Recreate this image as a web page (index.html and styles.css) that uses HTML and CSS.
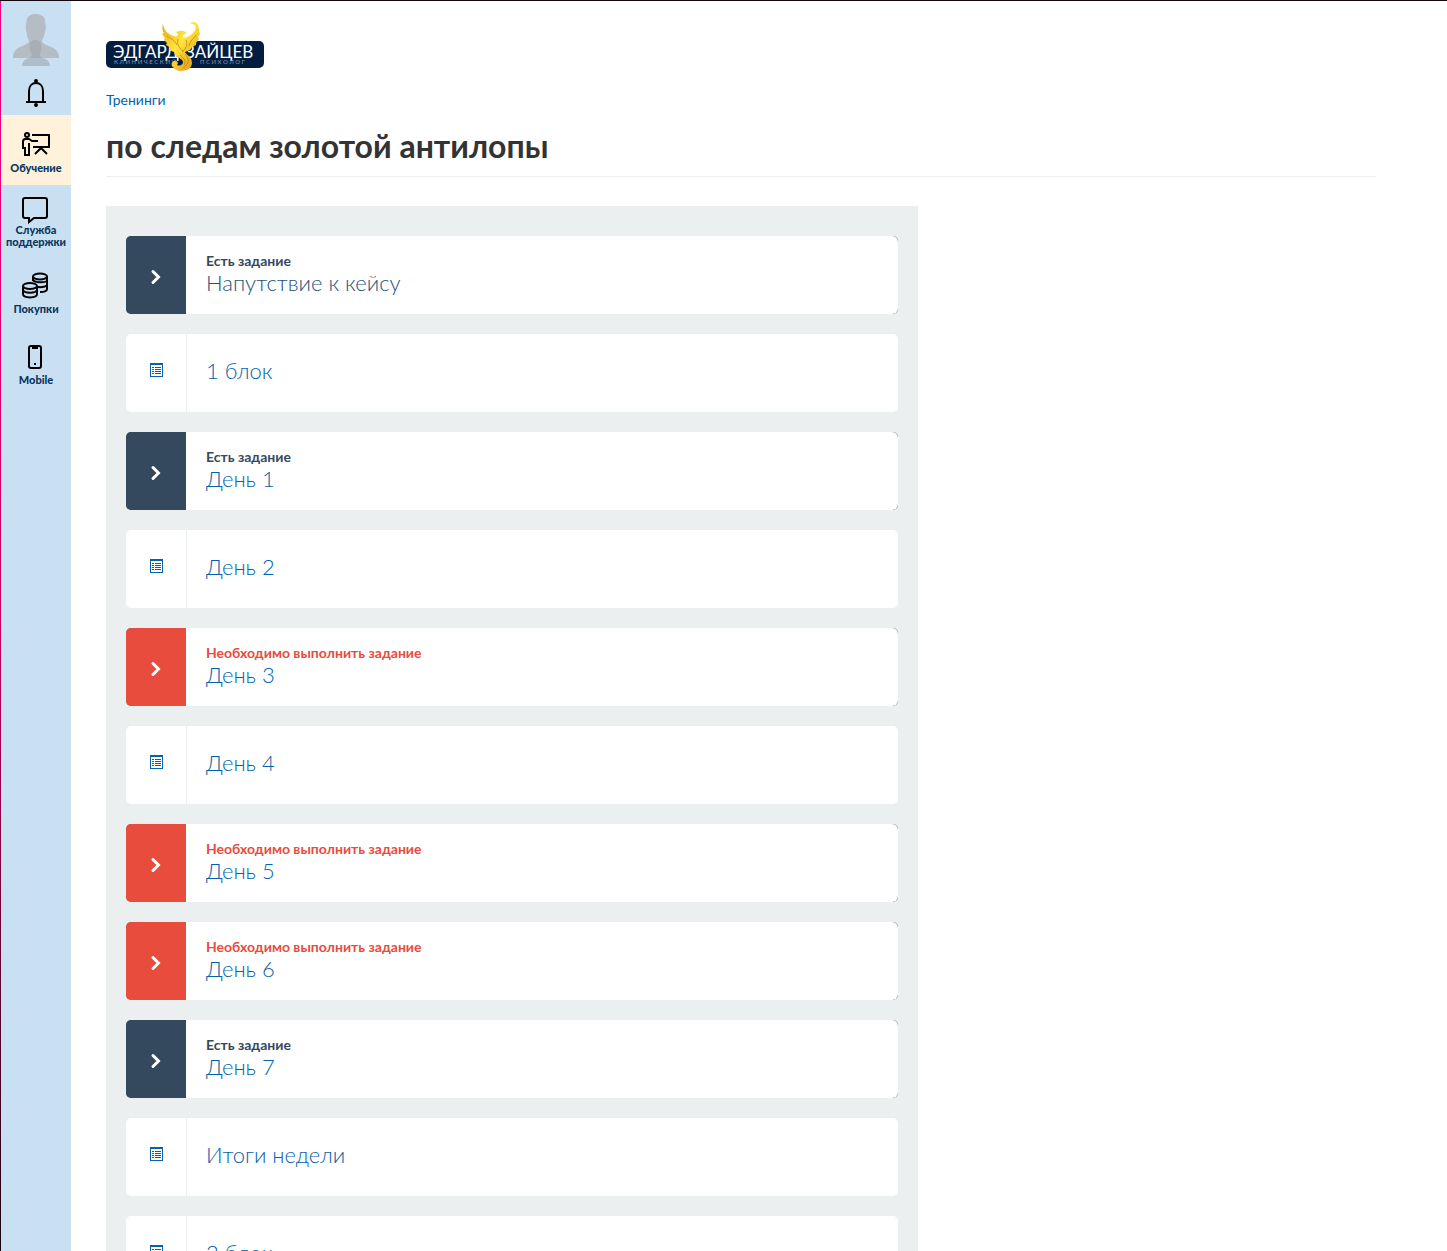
FILE: index.html
```
<!DOCTYPE html>
<html lang="ru">
<head>
  <meta charset="UTF-8">
  <meta name="viewport" content="width=device-width, initial-scale=1.0">
  <title>по следам золотой антилопы</title>
  <link rel="stylesheet" href="styles.css">
</head>
<body>
  <svg class="sprite" aria-hidden="true">
    <symbol id="icon-arrow" viewBox="0 0 12 16">
      <path d="M3 2.500 8.500 8 3 13.500" fill="none" stroke="currentColor" stroke-width="3" stroke-linecap="round"/>
    </symbol>
    <symbol id="icon-list" viewBox="0 0 13 14">
      <path d="M0 0h13v14H0zM1 2v11h11V2z" fill="currentColor" fill-rule="evenodd"/>
      <path d="M2 4.500h2M2 6.500h2M2 8.500h2M2 10.500h2M5 4.500h6M5 6.500h6M5 8.500h6M5 10.500h6" stroke="currentColor"/>
    </symbol>
  </svg>

  <nav class="sidebar">
    <a class="user" href="#" aria-label="Профиль">
      <svg width="46" height="53" viewBox="0 0 46 53">
        <path d="M13.500 7C14 2 18 0 22.500 0S32 2 32 7L33 14 31.500 20C31 24 29 25 29 28C35 34 46 32 46 44H0C0 32 10 34 16 28C16 25 14 24 14 20L12.500 14Z" fill="#b5bcc4"/>
        <path d="M17 30C17 27 20 26 22.500 26S28 27 28 30L28.500 35 26.500 41C28 45 37 44 37 52H9C9 44 18 45 19 41L16.500 35Z" fill="#9fa5ac" fill-opacity=".6"/>
      </svg>
    </a>
    <a class="bell" href="#" aria-label="Уведомления">
      <svg width="22" height="28" viewBox="0 0 22 28" fill="none" stroke="#000" stroke-width="2">
        <path d="M4 23V12C4 7 7 4 11 4S18 7 18 12V23M1 23H21"/>
        <circle cx="11" cy="2" r="1"/>
        <circle cx="11" cy="26" r="1"/>
      </svg>
    </a>
    <a class="item active" href="#">
      <svg width="28" height="26" viewBox="0 0 28 26" fill="none" stroke="#000" stroke-width="2">
        <circle cx="5" cy="3" r="2"/>
        <path d="M10 3H27V15H11M16 9H10L7 7H3.500C2 7 1 8 1 9.500V16H3V23H7V17M7 23V11M19 15V18M19 16L13 22M19 16L25 22"/>
      </svg>
      <span>Обучение</span>
    </a>
    <a class="item support" href="#">
      <svg width="30" height="27" viewBox="0 0 30 27" fill="none" stroke="#000" stroke-width="2">
        <path d="M4 1H24C25.500 1 26 2 26 3V19C26 20.500 25 21 24 21H13L8 25V21H4C2.500 21 2 20 2 19V3C2 2 2.500 1 4 1Z"/>
      </svg>
      <span>Служба поддержки</span>
    </a>
    <a class="item purchases" href="#">
      <svg width="30" height="27" viewBox="0 0 30 27" fill="none" stroke="#000" stroke-width="2">
        <ellipse cx="19" cy="4.500" rx="7" ry="3"/>
        <path d="M12 5V9M26 4.500V17C26 19 23 20 19 20M12 8C14 11 25 11 26 8.500M17 15C21 15.500 26 14.500 26 12.500"/>
        <ellipse cx="9" cy="14" rx="7" ry="3"/>
        <path d="M2 14V22C2 26.500 16 26.500 16 22V14M2 18C3 21.500 15 21.500 16 18"/>
      </svg>
      <span>Покупки</span>
    </a>
    <a class="item mobile" href="#">
      <svg width="18" height="25" viewBox="0 0 18 25" fill="none" stroke="#000" stroke-width="2">
        <rect x="2" y="1" width="12" height="22" rx="2"/>
        <path d="M5 2.500H11" stroke-width="3"/>
        <path d="M7 19H9"/>
      </svg>
      <span>Mobile</span>
    </a>
  </nav>

  <main class="page">
    <a class="logo" href="#" aria-label="Эдгард Зайцев">
      <svg width="158" height="50" viewBox="0 0 158 50">
        <defs>
          <linearGradient id="gold" x1="0" y1="0" x2="1" y2="1">
            <stop offset="0" stop-color="#e5a51b"/>
            <stop offset=".45" stop-color="#ffe63b"/>
            <stop offset="1" stop-color="#d98a12"/>
          </linearGradient>
        </defs>
        <rect y="20" width="158" height="27" rx="5" fill="#031d40"/>
        <text class="logo-name" x="7" y="37">ЭДГАРД</text>
        <text class="logo-name" x="79" y="37">ЗАЙЦЕВ</text>
        <text class="logo-sub" x="8" y="43">К Л И Н И Ч Е С К И Й</text>
        <text class="logo-sub" x="94" y="43">П С И Х О Л О Г</text>
        <path d="M57 3C58 10 62 13 68 15C70 16 72 15 72 13L70 11 74 10C77 9 79 11 81 12L77 14C76 17 79 17 81 16C88 13 91 8 89 4L84 2C90 -1 93 3 93 10L94 13 92 16 93 18 90 22 90 24 86 26 84 29 79 31C80 34 86 35 86 42C86 47 81 50 75 50C71 50 68 48 67 46C65 45 65 41 68 40C71 39 73 42 71 44C75 46 79 42 76 39C73 36 68 35 68 31L63 29 65 27 60 24 61 22 58 19 59 17 56 13 58 12C56 9 56 6 57 3Z" fill="url(#gold)"/>
        <path d="M72 18C71 24 73 27 77 30M80 19C82 24 80 28 76 31M61 15C65 18 69 19 71 24M90 14C88 18 84 19 83 25M79 33C84 38 83 43 77 47M74 34C79 38 80 41 78 44" fill="none" stroke="#b77b12" stroke-opacity=".7"/>
      </svg>
    </a>
    <div class="breadcrumbs"><a href="#">Тренинги</a></div>
    <h1>по следам золотой антилопы</h1>

    <ul class="lessons">
      <li><a class="lesson task visited" href="#">
        <span class="mark"><svg width="12" height="16"><use href="#icon-arrow"/></svg></span>
        <span class="info"><b>Есть задание</b><span class="title">Напутствие к кейсу</span></span>
      </a></li>
      <li><a class="lesson" href="#">
        <span class="mark"><svg width="13" height="14"><use href="#icon-list"/></svg></span>
        <span class="info"><span class="title">1 блок</span></span>
      </a></li>
      <li><a class="lesson task" href="#">
        <span class="mark"><svg width="12" height="16"><use href="#icon-arrow"/></svg></span>
        <span class="info"><b>Есть задание</b><span class="title">День 1</span></span>
      </a></li>
      <li><a class="lesson" href="#">
        <span class="mark"><svg width="13" height="14"><use href="#icon-list"/></svg></span>
        <span class="info"><span class="title">День 2</span></span>
      </a></li>
      <li><a class="lesson task required" href="#">
        <span class="mark"><svg width="12" height="16"><use href="#icon-arrow"/></svg></span>
        <span class="info"><b>Необходимо выполнить задание</b><span class="title">День 3</span></span>
      </a></li>
      <li><a class="lesson" href="#">
        <span class="mark"><svg width="13" height="14"><use href="#icon-list"/></svg></span>
        <span class="info"><span class="title">День 4</span></span>
      </a></li>
      <li><a class="lesson task required" href="#">
        <span class="mark"><svg width="12" height="16"><use href="#icon-arrow"/></svg></span>
        <span class="info"><b>Необходимо выполнить задание</b><span class="title">День 5</span></span>
      </a></li>
      <li><a class="lesson task required" href="#">
        <span class="mark"><svg width="12" height="16"><use href="#icon-arrow"/></svg></span>
        <span class="info"><b>Необходимо выполнить задание</b><span class="title">День 6</span></span>
      </a></li>
      <li><a class="lesson task" href="#">
        <span class="mark"><svg width="12" height="16"><use href="#icon-arrow"/></svg></span>
        <span class="info"><b>Есть задание</b><span class="title">День 7</span></span>
      </a></li>
      <li><a class="lesson" href="#">
        <span class="mark"><svg width="13" height="14"><use href="#icon-list"/></svg></span>
        <span class="info"><span class="title">Итоги недели</span></span>
      </a></li>
      <li><a class="lesson" href="#">
        <span class="mark"><svg width="13" height="14"><use href="#icon-list"/></svg></span>
        <span class="info"><span class="title">2 блок</span></span>
      </a></li>
    </ul>
  </main>
</body>
</html>
```
FILE: styles.css
```
* {
  box-sizing: border-box;
}
body {
  display: flex;
  height: 100vh;
  margin: 0;
  overflow: hidden;
  border-top: 1px solid #14060f;
  background: #fff;
  font-family: Lato, "Open Sans", sans-serif;
  font-size: 14px;
  color: #333;
}
a {
  color: #0562ab;
  text-decoration: none;
}
svg {
  display: block;
}
.sprite {
  position: absolute;
  width: 0;
  height: 0;
}

/* sidebar */
.sidebar {
  flex: 0 0 71px;
  border-left: 1px solid;
  border-image: linear-gradient(#f0047f, #c80060 50%, #14060f) 1;
  background: #c9e0f3;
}
.sidebar a {
  display: flex;
  flex-direction: column;
  align-items: center;
}
.user {
  padding-top: 13px;
}
.bell {
  height: 48px;
  padding-top: 12px;
}
.item {
  height: 70px;
  font-size: 11px;
  font-weight: 900;
  line-height: 12px;
  text-align: center;
}
.sidebar .item {
  color: #0a3660;
}
.item span {
  margin-top: 4px;
}
.active {
  padding-top: 17px;
  background: #fff1da;
}
.support {
  padding-top: 12px;
}
.support span {
  margin-top: 0;
}
.purchases,
.mobile {
  padding-top: 17px;
}
.mobile {
  padding-top: 20px;
}

/* content */
.page {
  flex: 1;
  min-width: 0;
  padding: 20px 71px 30px 35px;
  overflow-y: auto;
  scrollbar-width: none;
}
.logo {
  display: inline-block;
  vertical-align: top;
}
.logo-name {
  font-family: Lato, "Open Sans", sans-serif;
  font-size: 17px;
  fill: #fff;
}
.logo-sub {
  font-family: Lato, "Open Sans", sans-serif;
  font-size: 6px;
  fill: #8d9bb0;
}
.breadcrumbs {
  margin-top: 19px;
  line-height: 20px;
}
h1 {
  margin: 18px 0 29px;
  padding-bottom: 12px;
  border-bottom: 1px solid #eee;
  font-size: 32px;
  line-height: 36px;
}
.lessons {
  display: flex;
  flex-direction: column;
  gap: 20px;
  max-width: 812px;
  margin: 0;
  padding: 30px 20px;
  list-style: none;
  background: #ebeff0;
}
.lesson {
  display: flex;
  height: 78px;
  overflow: hidden;
  border-radius: 5px;
  background: #fff;
}
.mark {
  flex: 0 0 61px;
  display: flex;
  align-items: center;
  justify-content: center;
  padding-bottom: 6px;
  border-right: 1px solid #ebeff0;
}
.info {
  flex: 1;
  display: flex;
  flex-direction: column;
  justify-content: center;
  padding: 0 19px 4px;
}
.info b {
  line-height: 18px;
  color: #34495e;
}
.title {
  font-size: 22px;
  font-weight: 300;
  line-height: 26px;
}
.task {
  background: #8a9299;
}
.task .mark {
  flex-basis: 60px;
  padding: 4px 0 0;
  border: none;
  background: #34495e;
  color: #fff;
}
.task .info {
  padding: 0 20px 2px;
  border-radius: 0 6px 6px 0;
  background: #fff;
}
.visited {
  color: #23527c;
}
.required .mark {
  background: #e84c3d;
}
.required b {
  color: #e84c3d;
}
```
